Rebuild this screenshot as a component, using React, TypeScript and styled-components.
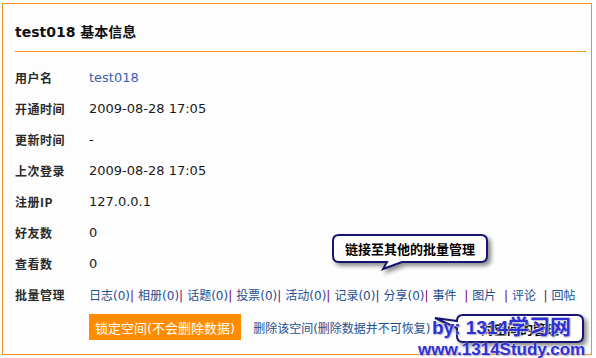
import styled, { createGlobalStyle } from "styled-components";

const GlobalStyle = createGlobalStyle`
  body {
    margin: 0;
    background: #fdfdfd;
    font-family: "DejaVu Sans", "Noto Sans CJK SC", sans-serif;
  }
`;

const Page = styled.div`
  position: relative;
  width: 596px;
  height: 358px;
  overflow: hidden;
`;

const Panel = styled.div`
  box-sizing: border-box;
  width: 590px;
  height: 352px;
  margin: 3px 0 0 2px;
  border: 1px solid #f0901e;
  padding: 18px 5px 0 12px;
`;

const Title = styled.h2`
  margin: 0;
  padding-bottom: 9px;
  border-bottom: 1px solid #f0901e;
  font-size: 14px;
  line-height: 20px;
  font-weight: bold;
  color: #111;
`;

const InfoGrid = styled.div`
  display: grid;
  grid-template-columns: 74px 1fr;
  grid-auto-rows: 31px;
  align-items: center;
  margin-top: 10px;
`;

const Label = styled.div`
  font-family: "Noto Sans CJK SC", sans-serif;
  font-size: 12px;
  font-weight: bold;
  letter-spacing: 0.5px;
  color: #2a2a2a;
`;

const Value = styled.div`
  font-size: 13px;
  color: #1a1a1a;
`;

const Link = styled.a<{ $dark?: boolean }>`
  color: ${(p) => (p.$dark ? "#1f4f8f" : "#3a62b0")};
  text-decoration: none;
  cursor: pointer;
`;

const BatchList = styled.div`
  font-size: 12px;
  color: #1f4f8f;
  white-space: nowrap;
`;

const Sep = styled.span`
  color: #800060;
  margin-right: 4px;
`;

const Actions = styled.div`
  grid-column: 2;
  display: flex;
  align-items: center;
  gap: 12px;
  height: 26px;
  margin-top: 3px;
`;

const LockButton = styled.button`
  height: 26px;
  padding: 0 6px;
  border: none;
  background: #ff8c00;
  color: #fff;
  font-family: "DejaVu Sans", "Noto Sans CJK SC", sans-serif;
  font-size: 13px;
  cursor: pointer;
`;

const Bubble = styled.div<{ $left: number; $top: number; $w: number; $h: number }>`
  position: absolute;
  left: ${(p) => p.$left}px;
  top: ${(p) => p.$top}px;
  width: ${(p) => p.$w}px;
  height: ${(p) => p.$h}px;
  svg {
    position: absolute;
    left: 0;
    top: 0;
    filter: drop-shadow(3px 3px 2px rgba(0, 0, 0, 0.45));
  }
`;

const BubbleText = styled.div<{ $x: number; $w: number }>`
  position: relative;
  margin-left: ${(p) => p.$x}px;
  width: ${(p) => p.$w}px;
  margin-top: 3px;
  line-height: 27px;
  text-align: center;
  font-family: "Noto Sans CJK SC", sans-serif;
  font-size: 13px;
  font-weight: bold;
  color: #000;
`;

const Watermark = styled.div`
  position: absolute;
  left: 418px;
  top: 316px;
  font-family: "Liberation Sans", "Noto Sans CJK SC", sans-serif;
  font-weight: bold;
  color: #2f2fd6;
  text-shadow: 0 0 2px #fff, 1px 1px 1px #9aa0c0;
`;

const MarkLine = styled.div<{ $size: number; $indent: number }>`
  margin-left: ${(p) => p.$indent}px;
  font-size: ${(p) => p.$size}px;
  line-height: 22px;
  white-space: nowrap;
  span {
    font-size: 21px;
  }
`;

const batch = [
  ["日志", 0],
  ["相册", 0],
  ["话题", 0],
  ["投票", 0],
  ["活动", 0],
  ["记录", 0],
  ["分享", 0],
] as const;

const plain = ["事件", "图片", "评论", "回帖"];

export default function App() {
  return (
    <Page>
      <GlobalStyle />
      <Panel>
        <Title>test018 基本信息</Title>
        <InfoGrid>
          <Label>用户名</Label>
          <Value>
            <Link>test018</Link>
          </Value>
          <Label>开通时间</Label>
          <Value>2009-08-28 17:05</Value>
          <Label>更新时间</Label>
          <Value>-</Value>
          <Label>上次登录</Label>
          <Value>2009-08-28 17:05</Value>
          <Label>注册IP</Label>
          <Value>127.0.0.1</Value>
          <Label>好友数</Label>
          <Value>0</Value>
          <Label>查看数</Label>
          <Value>0</Value>
          <Label>批量管理</Label>
          <BatchList>
            {batch.map(([name, n]) => (
              <span key={name}>
                <Link $dark>
                  {name}({n})
                </Link>
                <Sep>|</Sep>
              </span>
            ))}
            {plain.map((name, i) => (
              <span key={name}>
                <Link $dark>{name}</Link>
                {i < plain.length - 1 && <Sep> &nbsp;|</Sep>}
              </span>
            ))}
          </BatchList>
          <Actions>
            <LockButton>锁定空间(不会删除数据)</LockButton>
            <BatchList>
              <Link $dark>删除该空间(删除数据并不可恢复)</Link>
            </BatchList>
          </Actions>
        </InfoGrid>
      </Panel>

      <Bubble $left={330} $top={232} $w={165} $h={48}>
        <svg width="165" height="48" viewBox="0 0 165 48">
          <path
            d="M9,3 H151 Q157,3 157,9 V24 Q157,30 151,30 H72 L53,37 L57,30 H9 Q3,30 3,24 V9 Q3,3 9,3 Z"
            fill="#fff"
            stroke="#161670"
            strokeWidth="2"
          />
        </svg>
        <BubbleText $x={3} $w={154}>链接至其他的批量管理</BubbleText>
      </Bubble>

      <Bubble $left={430} $top={312} $w={160} $h={36}>
        <svg width="160" height="36" viewBox="0 0 160 36">
          <path
            d="M33,3 H147 Q153,3 153,9 V24 Q153,30 147,30 H33 Q27,30 27,24 V16 L5,6 L27,9 Q27,3 33,3 Z"
            fill="#fff"
            stroke="#161670"
            strokeWidth="2"
          />
        </svg>
        <BubbleText $x={27} $w={126}>对空间的管理</BubbleText>
      </Bubble>

      <Watermark>
        <MarkLine $size={19} $indent={14}>
          by: 1314<span>学习网</span>
        </MarkLine>
        <MarkLine $size={17} $indent={0}>
          www.1314Study.com
        </MarkLine>
      </Watermark>
    </Page>
  );
}
